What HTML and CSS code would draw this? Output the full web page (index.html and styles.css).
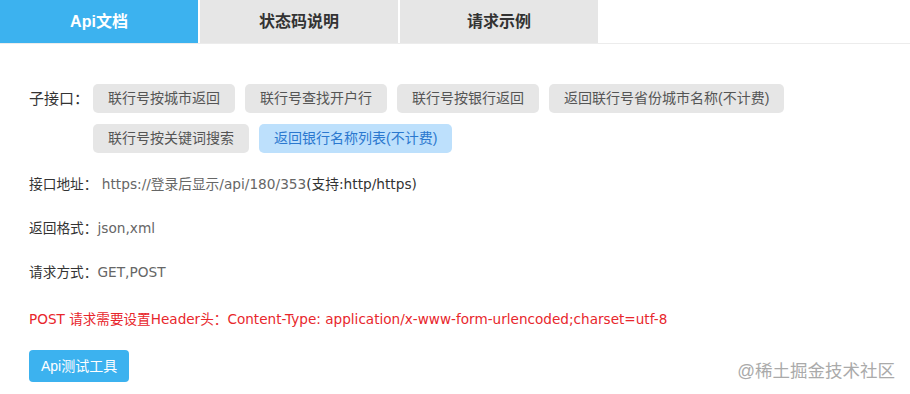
FILE: index.html
```html
<!DOCTYPE html>
<html lang="zh-CN">
  <head>
    <meta charset="UTF-8" />
    <title>Api文档</title>
    <link rel="stylesheet" href="styles.css">
  </head>
  <body>
    <div class="tabs">
      <a class="tab active" href="#">Api文档</a>
      <a class="tab" href="#">状态码说明</a>
      <a class="tab" href="#">请求示例</a>
    </div>
    <div class="doc">
      <div class="sub-api">
        <span class="label">子接口：</span>
        <div class="sub-list">
          <a href="#">联行号按城市返回</a>
          <a href="#">联行号查找开户行</a>
          <a href="#">联行号按银行返回</a>
          <a href="#">返回联行号省份城市名称(不计费)</a>
          <a href="#">联行号按关键词搜索</a>
          <a class="current" href="#">返回银行名称列表(不计费)</a>
        </div>
      </div>
      <p class="row">接口地址： <span class="gray">https://登录后显示/api/180/353</span>(支持:http/https)</p>
      <p class="row">返回格式：<span class="gray">json,xml</span></p>
      <p class="row">请求方式：<span class="gray">GET,POST</span></p>
      <p class="row red">POST 请求需要设置Header头：Content-Type: application/x-www-form-urlencoded;charset=utf-8</p>
      <div class="foot">
        <a class="test-btn" href="#">Api测试工具</a>
        <span class="mark">@稀土掘金技术社区</span>
      </div>
    </div>
  </body>
</html>
```

FILE: styles.css
```css
body {
  margin: 0;
  font-family: "Liberation Sans", "Noto Sans CJK SC", sans-serif;
  color: #333;
  background: #fff;
}
a {
  text-decoration: none;
}
.tabs {
  display: flex;
  gap: 2px;
  height: 43px;
  border-bottom: 1px solid #ececec;
}
.tab {
  width: 198px;
  line-height: 43px;
  text-align: center;
  font-size: 16px;
  font-weight: bold;
  color: #333;
  background: #e6e6e6;
}
.tab.active {
  background: #3cb2ef;
  color: #fff;
}
.doc {
  padding: 40px 0 0 29px;
}
.sub-api {
  display: flex;
  align-items: flex-start;
}
.sub-api .label {
  font-size: 15px;
  line-height: 30px;
  width: 64px;
  flex-shrink: 0;
}
.sub-list {
  display: flex;
  flex-wrap: wrap;
  gap: 11px 10px;
  width: 720px;
}
.sub-list a {
  font-size: 14px;
  line-height: 29px;
  padding: 0 15px;
  border-radius: 5px;
  background: #e6e6e6;
  color: #555;
}
.sub-list a.current {
  background: #bde0fc;
  color: #2b78cf;
}
.row {
  margin: 0;
  font-family: "DejaVu Sans", "Noto Sans CJK SC", sans-serif;
  font-size: 13.7px;
  line-height: 20px;
  margin-top: 21px;
}
.row + .row {
  margin-top: 24px;
}
.gray {
  color: #666;
}
.row.red {
  color: #e8262c;
  font-size: 13.6px;
  margin-top: 27px;
}
.foot {
  display: flex;
  align-items: center;
  justify-content: space-between;
  margin-top: 20px;
  padding-right: 15px;
}
.test-btn {
  font-size: 14px;
  line-height: 32px;
  padding: 0 12px;
  border-radius: 4px;
  background: #3cb2ef;
  color: #fff;
}
.mark {
  font-size: 17.5px;
  color: #aaa;
  margin-top: 8px;
}
```
